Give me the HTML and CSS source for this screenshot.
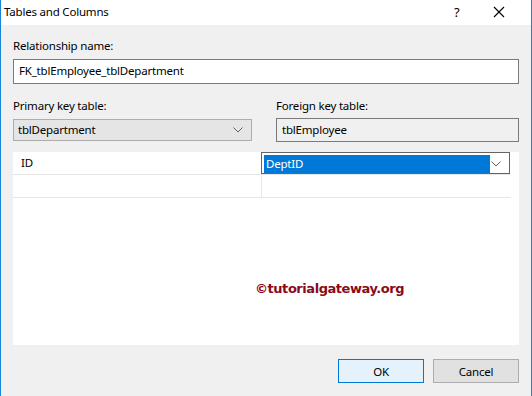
FILE: index.html
```html
<!DOCTYPE html>
<html lang="en">
<head>
    <meta charset="UTF-8">
    <title>Tables and Columns</title>
    <link rel="stylesheet" href="styles.css">
</head>
<body>
    <div class="window">
        <div class="titlebar">
            <span class="title">Tables and Columns</span>
            <span class="help">?</span>
            <span class="close">
                <svg width="12" height="12" viewBox="0 0 12 12"><path d="M1 1 L11 11 M11 1 L1 11" stroke="#000" stroke-width="1.1" fill="none"/></svg>
            </span>
        </div>
        <div class="content">
            <label class="field-label">Relationship name:</label>
            <div class="textbox">FK_tblEmployee_tblDepartment</div>

            <div class="key-tables">
                <div class="key-col">
                    <label class="field-label">Primary key table:</label>
                    <div class="combo">
                        <span>tblDepartment</span>
                        <svg class="arrow" width="10" height="6" viewBox="0 0 10 6"><path d="M0.5 0.5 L5 5 L9.5 0.5" stroke="#606060" fill="none"/></svg>
                    </div>
                </div>
                <div class="key-col">
                    <label class="field-label">Foreign key table:</label>
                    <div class="textbox readonly">tblEmployee</div>
                </div>
            </div>

            <div class="grid">
                <div class="grid-row">
                    <div class="cell">ID</div>
                    <div class="cell editing">
                        <span class="selected">DeptID</span>
                        <svg class="arrow" width="10" height="6" viewBox="0 0 10 6"><path d="M0.5 0.5 L5 5 L9.5 0.5" stroke="#606060" fill="none"/></svg>
                    </div>
                </div>
                <div class="grid-row">
                    <div class="cell"></div>
                    <div class="cell"></div>
                </div>
                <div class="watermark">©tutorialgateway.org</div>
            </div>

            <div class="buttons">
                <button class="btn default">OK</button>
                <button class="btn">Cancel</button>
            </div>
        </div>
    </div>
</body>
</html>
```

FILE: styles.css
```css
body {
    margin: 0;
    font-family: "Noto Sans", "Open Sans", sans-serif;
    font-size: 11.5px;
    letter-spacing: -0.2px;
    color: #000;
}
.window {
    width: 530px;
    height: 396px;
    border-left: 1px solid #1883d7;
    border-right: 1px solid #1883d7;
    background-color: #f0f0f0;
    display: flex;
    flex-direction: column;
}
.titlebar {
    height: 25px;
    background-color: #fff;
    display: flex;
    align-items: center;
}
.title {
    flex: 1;
    padding-left: 3px;
    margin-top: -2px;
}
.help {
    width: 16px;
    margin-right: 23px;
    font-size: 13px;
    margin-top: -2px;
}
.close {
    width: 12px;
    height: 12px;
    margin-right: 26px;
    margin-top: -2px;
}
.close svg {
    display: block;
}
.content {
    flex: 1;
    padding: 13px 12px 0 12px;
    display: flex;
    flex-direction: column;
}
.field-label {
    display: block;
    height: 15px;
    line-height: 15px;
}
.textbox {
    margin-top: 6px;
    height: 25px;
    box-sizing: border-box;
    border: 1px solid #7a7a7a;
    background-color: #fff;
    padding-left: 5px;
    line-height: 22px;
}
.textbox.readonly {
    background-color: #f0f0f0;
    height: 24px;
    line-height: 21px;
    margin-top: 5px;
}
.key-tables {
    margin-top: 14px;
    display: flex;
    gap: 24px;
}
.key-col {
    flex: 1;
}
.key-col:first-child {
    flex: 0 0 239px;
}
.combo {
    margin-top: 6px;
    height: 22px;
    box-sizing: border-box;
    border: 1px solid #adadad;
    background-color: #e5e5e5;
    display: flex;
    align-items: center;
    justify-content: space-between;
    padding: 0 8px 0 4px;
    line-height: 20px;
}
.grid {
    position: relative;
    margin-top: 10px;
    height: 193px;
    background-color: #fff;
    box-sizing: border-box;
    padding-right: 8px;
}
.grid-row {
    display: flex;
    height: 23px;
    border-bottom: 1px solid #e6e6e6;
    box-sizing: border-box;
}
.cell {
    box-sizing: border-box;
    width: 248px;
    padding-left: 8px;
    line-height: 22px;
}
.cell + .cell {
    width: 249px;
    border-left: 1px solid #e6e6e6;
}
.cell.editing {
    border: 1px solid #646464;
    padding: 2px 8px 1px 2px;
    display: flex;
    align-items: center;
    justify-content: space-between;
}
.selected {
    flex: 0 0 226px;
    height: 18px;
    line-height: 18px;
    background-color: #0078d7;
    color: #fff;
    padding-left: 2px;
    box-sizing: border-box;
}
.watermark {
    position: absolute;
    left: 242px;
    top: 129px;
    font-family: "DejaVu Sans", sans-serif;
    font-weight: bold;
    font-size: 13px;
    letter-spacing: -0.45px;
    color: #8b0a1a;
}
.buttons {
    margin-top: 14px;
    display: flex;
    justify-content: flex-end;
    gap: 9px;
}
.btn {
    width: 86px;
    height: 24px;
    font-family: "Noto Sans", "Open Sans", sans-serif;
    font-size: 11.5px;
    letter-spacing: -0.2px;
    background-color: #e1e1e1;
    border: 1px solid #adadad;
    padding: 0;
    margin: 0;
    color: #000;
}
.btn.default {
    background-color: #e5f1fb;
    border-color: #0078d7;
}
```
